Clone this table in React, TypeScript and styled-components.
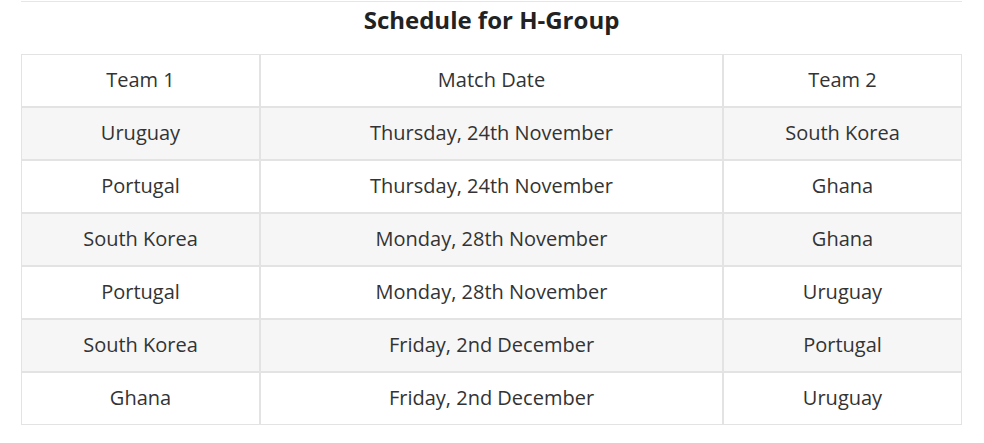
import React from "react";
import styled, { createGlobalStyle } from "styled-components";

const Global = createGlobalStyle`
  html, body { margin: 0; padding: 0; background: #fff; }
  body { font-family: "Open Sans", "Noto Sans", sans-serif; color: #333; }
`;

const Page = styled.div`
  padding: 1px 22px 0 21px;
`;

const Section = styled.section`
  border-top: 1px solid #e6e6e6;
`;

const Title = styled.h2`
  margin: 0;
  padding: 1px 0 18px;
  font-size: 24px;
  line-height: 33px;
  font-weight: 700;
  text-align: center;
  color: #222;
`;

const Table = styled.table`
  width: 100%;
  border-collapse: separate;
  border-spacing: 0;
  table-layout: fixed;
`;

const Row = styled.tr<{ $striped?: boolean }>`
  background: ${(p) => (p.$striped ? "#f6f6f6" : "#fff")};
`;

const Cell = styled.td`
  border: 1px solid #e3e3e3;
  height: 53px;
  padding: 0 8px 3px;
  box-sizing: border-box;
  text-align: center;
  vertical-align: middle;
  font-size: 20px;
  color: #333;
  font-weight: 400;
`;

const HeadCell = styled(Cell).attrs({ as: "th" })`
  font-weight: 400;
`;

const rows: [string, string, string][] = [
  ["Uruguay", "Thursday, 24th November", "South Korea"],
  ["Portugal", "Thursday, 24th November", "Ghana"],
  ["South Korea", "Monday, 28th November", "Ghana"],
  ["Portugal", "Monday, 28th November", "Uruguay"],
  ["South Korea", "Friday, 2nd December", "Portugal"],
  ["Ghana", "Friday, 2nd December", "Uruguay"],
];

export default function App() {
  return (
    <Page>
      <Global />
      <Section>
        <Title>Schedule for H-Group</Title>
        <Table>
          <colgroup>
            <col style={{ width: 239 }} />
            <col style={{ width: 463 }} />
            <col style={{ width: 239 }} />
          </colgroup>
          <thead>
            <Row>
              <HeadCell>Team 1</HeadCell>
              <HeadCell>Match Date</HeadCell>
              <HeadCell>Team 2</HeadCell>
            </Row>
          </thead>
          <tbody>
            {rows.map((r, i) => (
              <Row key={i} $striped={i % 2 === 0}>
                <Cell>{r[0]}</Cell>
                <Cell>{r[1]}</Cell>
                <Cell>{r[2]}</Cell>
              </Row>
            ))}
          </tbody>
        </Table>
      </Section>
    </Page>
  );
}
